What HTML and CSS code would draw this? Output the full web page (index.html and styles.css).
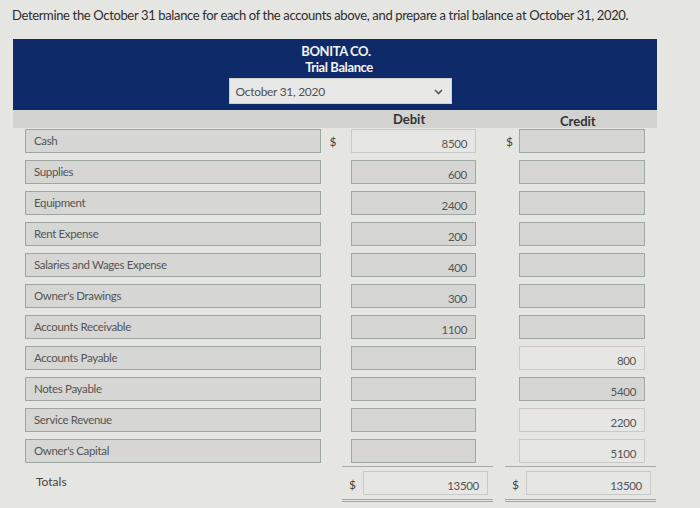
FILE: index.html
```html
<!DOCTYPE html>
<html>
<head>
<meta charset="utf-8">
<link rel="stylesheet" href="styles.css">
</head>
<body>
<p class="question">Determine the October 31 balance for each of the accounts above, and prepare a trial balance at October 31, 2020.</p>
<div class="sheet">
  <div class="banner">
    <div class="company">BONITA CO.</div>
    <div class="title">Trial Balance</div>
    <div class="select">
      <span>October 31, 2020</span>
      <svg class="chev" width="9" height="6" viewBox="0 0 9 6"><path d="M1 1l3.5 3.5L8 1" fill="none" stroke="#555" stroke-width="1.6"/></svg>
    </div>
  </div>
  <div class="colhead">
    <span class="h-debit">Debit</span>
    <span class="h-credit">Credit</span>
  </div>
  <div class="grid">
    <div class="acct">Cash</div><div class="dollar">$</div><div class="inp light">8500</div><div class="dollar">$</div><div class="inp"></div>
    <div class="acct">Supplies</div><div></div><div class="inp">600</div><div></div><div class="inp"></div>
    <div class="acct">Equipment</div><div></div><div class="inp">2400</div><div></div><div class="inp"></div>
    <div class="acct">Rent Expense</div><div></div><div class="inp">200</div><div></div><div class="inp"></div>
    <div class="acct">Salaries and Wages Expense</div><div></div><div class="inp">400</div><div></div><div class="inp"></div>
    <div class="acct">Owner's Drawings</div><div></div><div class="inp">300</div><div></div><div class="inp"></div>
    <div class="acct">Accounts Receivable</div><div></div><div class="inp">1100</div><div></div><div class="inp"></div>
    <div class="acct">Accounts Payable</div><div></div><div class="inp"></div><div></div><div class="inp light">800</div>
    <div class="acct">Notes Payable</div><div></div><div class="inp"></div><div></div><div class="inp">5400</div>
    <div class="acct">Service Revenue</div><div></div><div class="inp"></div><div></div><div class="inp light">2200</div>
    <div class="acct">Owner's Capital</div><div></div><div class="inp"></div><div></div><div class="inp light">5100</div>
  </div>
  <div class="totals">
    <div class="tlabel">Totals</div>
    <div class="tcell"><span class="dollar">$</span><div class="inp light">13500</div></div>
    <div class="tcell"><span class="dollar">$</span><div class="inp light">13500</div></div>
  </div>
</div>
</body>
</html>
```
FILE: styles.css
```css
* { box-sizing: border-box; }
body {
  margin: 0;
  background: #e5e5e2;
  font-family: Lato, "Open Sans", sans-serif;
  color: #3a3a3a;
  width: 700px;
  height: 508px;
  overflow: hidden;
}
.question {
  margin: 0;
  padding: 7px 0 0 12px;
  font-size: 13px;
  letter-spacing: -0.35px;
  color: #2e2e2e;
  height: 39px;
}
.sheet {
  margin-left: 13px;
  width: 644px;
}
.banner {
  background: #0f2a68;
  height: 71px;
  display: flex;
  flex-direction: column;
  align-items: center;
  padding-top: 5px;
  color: #f4f4f4;
  font-weight: bold;
  font-size: 13px;
  letter-spacing: -0.4px;
}
.company { line-height: 15px; margin-left: 2px; }
.title { line-height: 17px; margin-left: 8px; }
.select {
  margin-top: 2px;
  margin-left: 10px;
  width: 223px;
  height: 26px;
  background: #e8e8e6;
  border: 1px solid #cfcfcd;
  display: flex;
  align-items: center;
  justify-content: space-between;
  padding: 0 8px 0 6px;
  font-weight: normal;
  font-size: 12px;
  color: #505050;
  letter-spacing: -0.3px;
}
.chev { margin-top: 2px; }
.colhead {
  background: #d2d2d0;
  height: 18px;
  position: relative;
  font-weight: bold;
  font-size: 13px;
  color: #333;
}
.h-debit { position: absolute; left: 380px; top: 1px; }
.h-credit { position: absolute; left: 547px; top: 3px; }
.grid {
  display: grid;
  grid-template-columns: 296px 30px 125px 43px 126px;
  grid-auto-rows: 24px;
  row-gap: 7px;
  padding-left: 12px;
  margin-top: 1px;
}
.acct {
  background: #d6d6d4;
  border: 1.5px solid #9da69f;
  font-size: 11.5px;
  color: #555;
  padding: 4px 0 0 8px;
  letter-spacing: -0.35px;
}
.dollar {
  font-size: 12px;
  color: #444;
  padding: 5px 6px 0 0;
  text-align: center;
}
.grid > .dollar:nth-child(4) { text-align: right; padding-right: 6px; }
.inp {
  background: #d5d5d3;
  border: 1.5px solid #9fa8a1;
  font-size: 11.5px;
  color: #555;
  text-align: right;
  padding: 7px 8px 0 0;
  letter-spacing: -0.3px;
}
.inp.light {
  background: #e6e6e4;
  border: 1px solid #c9c9c7;
}
.totals {
  display: grid;
  grid-template-columns: 305px 151px 151px;
  column-gap: 12px;
  padding-left: 12px;
  margin-top: 3px;
  height: 36px;
}
.tlabel {
  font-size: 12px;
  color: #444;
  padding: 8px 0 0 11px;
}
.tcell {
  display: grid;
  grid-template-columns: 21px 125px;
  border-top: 1.5px solid #a9a9a7;
  border-bottom: 3px double #a3a3a1;
  padding: 4px 0 4px 0;
  height: 36px;
}
.tcell .dollar { padding-top: 6px; text-align: left; padding-left: 7px; }
.tcell .inp { height: 24px; }
```
